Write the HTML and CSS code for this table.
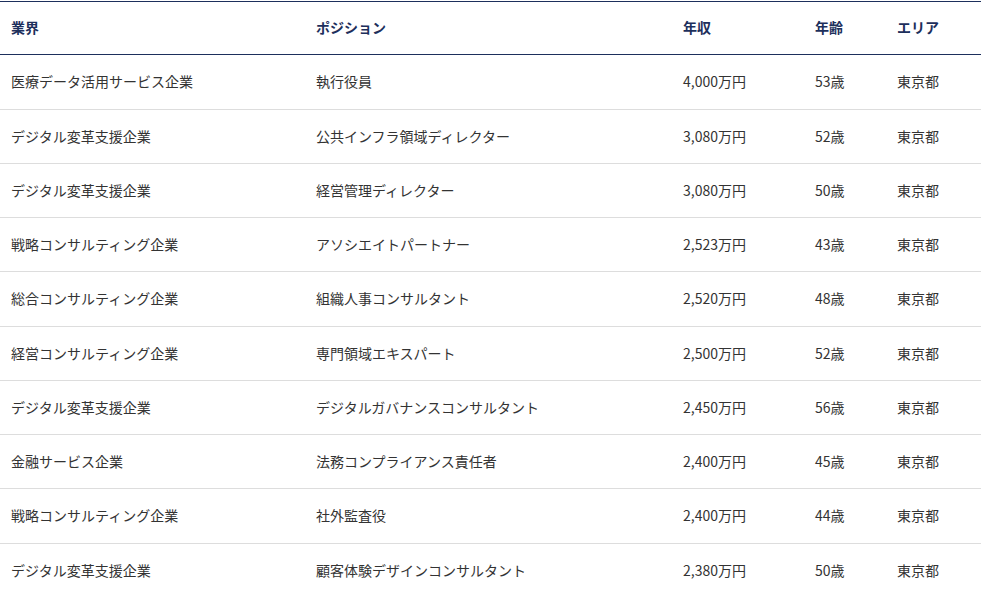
FILE: index.html
```html
<!DOCTYPE html>
<html lang="ja">
<head>
<meta charset="utf-8">
<link rel="stylesheet" href="styles.css">
</head>
<body>
<table class="salary-table">
  <colgroup>
    <col class="c-industry">
    <col class="c-position">
    <col class="c-income">
    <col class="c-age">
    <col class="c-area">
  </colgroup>
  <thead>
    <tr><th>業界</th><th>ポジション</th><th>年収</th><th>年齢</th><th>エリア</th></tr>
  </thead>
  <tbody>
    <tr><td>医療データ活用サービス企業</td><td>執行役員</td><td>4,000万円</td><td>53歳</td><td>東京都</td></tr>
    <tr><td>デジタル変革支援企業</td><td>公共インフラ領域ディレクター</td><td>3,080万円</td><td>52歳</td><td>東京都</td></tr>
    <tr><td>デジタル変革支援企業</td><td>経営管理ディレクター</td><td>3,080万円</td><td>50歳</td><td>東京都</td></tr>
    <tr><td>戦略コンサルティング企業</td><td>アソシエイトパートナー</td><td>2,523万円</td><td>43歳</td><td>東京都</td></tr>
    <tr><td>総合コンサルティング企業</td><td>組織人事コンサルタント</td><td>2,520万円</td><td>48歳</td><td>東京都</td></tr>
    <tr><td>経営コンサルティング企業</td><td>専門領域エキスパート</td><td>2,500万円</td><td>52歳</td><td>東京都</td></tr>
    <tr><td>デジタル変革支援企業</td><td>デジタルガバナンスコンサルタント</td><td>2,450万円</td><td>56歳</td><td>東京都</td></tr>
    <tr><td>金融サービス企業</td><td>法務コンプライアンス責任者</td><td>2,400万円</td><td>45歳</td><td>東京都</td></tr>
    <tr><td>戦略コンサルティング企業</td><td>社外監査役</td><td>2,400万円</td><td>44歳</td><td>東京都</td></tr>
    <tr><td>デジタル変革支援企業</td><td>顧客体験デザインコンサルタント</td><td>2,380万円</td><td>50歳</td><td>東京都</td></tr>
  </tbody>
</table>
</body>
</html>
```
FILE: styles.css
```css
html, body {
  margin: 0;
  padding: 0;
  background: #ffffff;
}
body {
  padding-top: 1px;
  font-family: "Noto Sans CJK JP", "Noto Sans", sans-serif;
  font-size: 14px;
  color: #333333;
}
.salary-table {
  width: 981px;
  border-collapse: collapse;
  table-layout: fixed;
  border-top: 1px solid #1d2f5c;
}
.c-industry { width: 305px; }
.c-position { width: 367px; }
.c-income { width: 132px; }
.c-age { width: 82px; }
.c-area { width: 95px; }
.salary-table th,
.salary-table td {
  text-align: left;
  padding: 15px 0 15px 11px;
  line-height: 23.25px;
  white-space: nowrap;
  vertical-align: middle;
}
.salary-table th {
  font-weight: 700;
  color: #1d2f5c;
  padding-top: 14px;
  padding-bottom: 15px;
  border-bottom: 1px solid #1d2f5c;
}
.salary-table td {
  border-bottom: 1px solid #dddddd;
}
```
